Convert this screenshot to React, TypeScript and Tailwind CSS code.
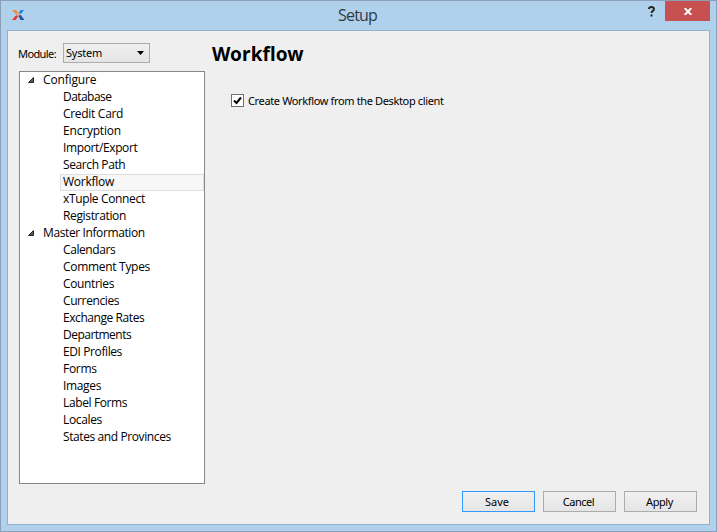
import React from "react";

type Item = { label: string; tracking: string };
type Group = Item & { items: Item[] };

const groups: Group[] = [
  {
    label: "Configure",
    tracking: "tracking-[-0.15px]",
    items: [
      { label: "Database", tracking: "tracking-[-0.55px]" },
      { label: "Credit Card", tracking: "tracking-[-0.3px]" },
      { label: "Encryption", tracking: "tracking-[-0.2px]" },
      { label: "Import/Export", tracking: "tracking-[-0.38px]" },
      { label: "Search Path", tracking: "tracking-[-0.4px]" },
      { label: "Workflow", tracking: "tracking-[-0.25px]" },
      { label: "xTuple Connect", tracking: "tracking-[-0.35px]" },
      { label: "Registration", tracking: "tracking-[-0.35px]" },
    ],
  },
  {
    label: "Master Information",
    tracking: "tracking-[-0.39px]",
    items: [
      { label: "Calendars", tracking: "tracking-[-0.42px]" },
      { label: "Comment Types", tracking: "tracking-[-0.3px]" },
      { label: "Countries", tracking: "tracking-[-0.35px]" },
      { label: "Currencies", tracking: "tracking-[-0.4px]" },
      { label: "Exchange Rates", tracking: "tracking-[-0.43px]" },
      { label: "Departments", tracking: "tracking-[-0.52px]" },
      { label: "EDI Profiles", tracking: "tracking-[-0.4px]" },
      { label: "Forms", tracking: "tracking-[-0.3px]" },
      { label: "Images", tracking: "tracking-[-0.35px]" },
      { label: "Label Forms", tracking: "tracking-[-0.38px]" },
      { label: "Locales", tracking: "tracking-[-0.35px]" },
      { label: "States and Provinces", tracking: "tracking-[-0.4px]" },
    ],
  },
];

function Logo() {
  return (
    <svg width="14" height="12" viewBox="0 0 14 12">
      <path d="M1 1h4l3 3.6L6.4 6.5Z" fill="#f08a3c" />
      <path d="M9.5 1H13L10 4.8 7.5 4.5Z" fill="#1484d8" />
      <path d="M1 11l3-3.7 3-1.5.3 1.2L4.7 11Z" fill="#e8392b" />
      <path d="M7 6.3l2.5-.5L13.5 11H9.6Z" fill="#2450a8" />
      <path d="M5.5 4.5l2.5-.3.8 1.8-2 1.2Z" fill="#eeb08c" />
    </svg>
  );
}

function TitleBar() {
  return (
    <header className="flex h-[29px] items-start pl-[10px] pr-[6px]">
      <div className="w-[60px] pt-2">
        <Logo />
      </div>
      <h1 className="flex-1 pl-[7px] text-center font-['Open_Sans',sans-serif] text-[16px] leading-[29px] tracking-[-0.85px] text-[#303a44]">
        Setup
      </h1>
      <div className="flex h-5 items-start">
        <span className="flex h-5 w-7 items-center justify-center pl-[2px]">
          <svg width="8" height="11" viewBox="0 0 8 11" fill="none">
            <path d="M1 3V2.3Q1.3 1 3.5 1T6 3Q6 4.3 4.5 5.1 3.6 5.6 3.6 7" stroke="#222" strokeWidth="1.9" />
            <path d="M2.5 8.5h2v2h-2z" fill="#222" />
          </svg>
        </span>
        <button className="flex h-5 w-[45px] items-center justify-center bg-[#c75050] pl-px">
          <svg width="8" height="7" viewBox="0 0 8 7">
            <path d="M.7 0L7.3 7M7.3 0L.7 7" stroke="white" strokeWidth="1.9" />
          </svg>
        </button>
      </div>
    </header>
  );
}

function Tree() {
  return (
    <nav className="mt-2 h-[413px] w-[186px] border border-[#828790] bg-white font-['Open_Sans',sans-serif] text-[12px] leading-[15px] text-black">
      {groups.map((g) => (
        <div key={g.label}>
          <div className="flex h-[17px] items-center pb-[2px] pl-2">
            <svg width="6" height="6" viewBox="0 0 6 6" className="mr-[9px]">
              <path d="M5.5.5v5h-5Z" fill="#595959" stroke="#262626" strokeWidth="1" />
            </svg>
            <span className={g.tracking}>{g.label}</span>
          </div>
          {g.items.map((i) => (
            <div
              key={i.label}
              className={
                i.label === "Workflow"
                  ? "ml-10 flex h-[17px] items-center whitespace-nowrap border border-[#dedede] bg-[#f7f7f7] pb-[2px] pl-[2px]"
                  : "ml-10 flex h-[17px] items-center whitespace-nowrap pb-[2px] pl-[3px]"
              }
            >
              <span className={i.tracking}>{i.label}</span>
            </div>
          ))}
        </div>
      ))}
    </nav>
  );
}

function Button({ label, primary }: { label: string; primary?: boolean }) {
  return (
    <button
      className={
        primary
          ? "h-[21px] w-[73px] border border-[#3399ff] bg-linear-to-b from-[#f0f0f0] to-[#e5e5e5] pr-[3px] leading-[19px]"
          : "h-[21px] w-[73px] border border-[#acacac] bg-linear-to-b from-[#f0f0f0] to-[#e5e5e5] pr-[2px] leading-[19px] tracking-[-0.45px]"
      }
    >
      {label}
    </button>
  );
}

export default function App() {
  return (
    <div className="flex h-[532px] w-[717px] flex-col border border-[#8aa0b8] bg-[#afd1ec] font-['Noto_Sans',sans-serif] text-[11px] text-black">
      <TitleBar />
      <main className="mx-[6px] flex h-[495px] flex-col border border-[#93b1cc] bg-[#efefef]">
        <div className="flex h-[453px]">
          <aside className="ml-[11px] w-[186px] shrink-0 pt-3">
            <div className="flex h-5 items-center">
              <label className="-ml-px w-[45px] whitespace-nowrap pt-[2px] leading-[18px] tracking-[-0.6px]">Module:</label>
              <div className="flex h-5 w-[87px] items-center justify-between border border-[#acacac] bg-linear-to-b from-[#f0f0f0] to-[#e5e5e5] pl-[2px] pr-[5px]">
                <span className="tracking-[-0.2px]">System</span>
                <svg width="7" height="4" viewBox="0 0 7 4">
                  <path d="M0 0h7L3.5 4Z" fill="black" />
                </svg>
              </div>
            </div>
            <Tree />
          </aside>
          <section className="ml-[6px] flex-1 pt-[10px]">
            <h2 className="pl-px text-[19px] font-bold leading-[26px] tracking-[0.1px]">Workflow</h2>
            <label className="ml-5 mt-[27px] flex h-[13px] items-center gap-1">
              <span className="flex h-[13px] w-[13px] items-center justify-center border border-[#707070] bg-white">
                <svg width="9" height="9" viewBox="0 0 9 9" fill="none">
                  <path d="M1 4.5L3.5 7 8 1.5" stroke="black" strokeWidth="2" />
                </svg>
              </span>
              <span className="whitespace-nowrap pt-[2px] tracking-[-0.36px]">
                Create Workflow from the Desktop client
              </span>
            </label>
          </section>
        </div>
        <footer className="mt-[7px] flex justify-end gap-2 pr-3">
          <Button label="Save" primary />
          <Button label="Cancel" />
          <Button label="Apply" />
        </footer>
      </main>
    </div>
  );
}
